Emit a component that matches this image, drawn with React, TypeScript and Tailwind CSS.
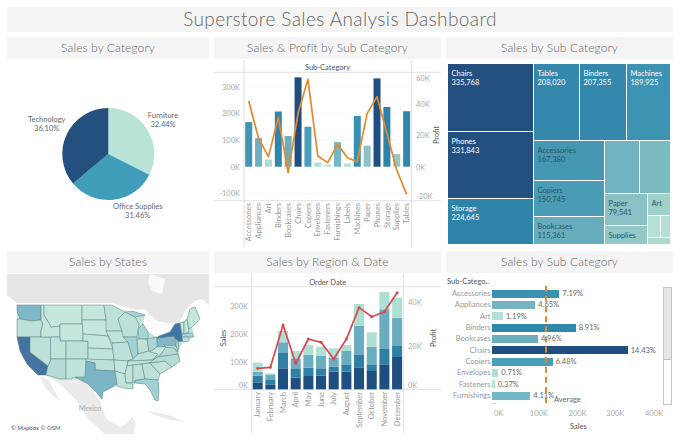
const font = { fontFamily: "Lato, 'Open Sans', sans-serif" }

function Header({ title }: { title: string }) {
  return (
    <div className="h-[22px] bg-[#f4f4f4] flex items-center justify-center text-[12px] font-light text-[#666] tracking-[0.1px]">
      {title}
    </div>
  )
}

function polar(cx: number, cy: number, r: number, pct: number) {
  const a = (pct / 100) * 2 * Math.PI
  return [cx + r * Math.sin(a), cy - r * Math.cos(a)]
}

function slice(from: number, to: number) {
  const [x1, y1] = polar(108.3, 154, 46, from)
  const [x2, y2] = polar(108.3, 154, 46, to)
  const large = to - from > 50 ? 1 : 0
  return `M108.3 154L${x1} ${y1}A46 46 0 ${large} 1 ${x2} ${y2}Z`
}

function PieChart() {
  return (
    <svg viewBox="7 60 202 190" className="w-[202px] h-[190px] block" fontSize="7.5" fill="#666" textAnchor="middle">
      <path d={slice(0, 32.44)} fill="#b9e3d7" />
      <path d={slice(32.44, 63.9)} fill="#419ebb" />
      <path d={slice(63.9, 100)} fill="#24507f" />
      <text x="163" y="118">Furniture</text>
      <text x="163" y="127">32.44%</text>
      <text x="46.7" y="122">Technology</text>
      <text x="46.7" y="131">36.10%</text>
      <text x="137.7" y="209">Office Supplies</text>
      <text x="137.7" y="218">31.46%</text>
    </svg>
  )
}

const subCats = [
  ["Accessories", 167, 213, "#3f95b3"],
  ["Appliances", 107, 325, "#6fb0bf"],
  ["Art", 27, 380, "#acdcd2"],
  ["Binders", 207, 262, "#2f88ac"],
  ["Bookcases", 115, 428, "#6bafbd"],
  ["Chairs", 335, 250, "#1f4e80"],
  ["Copiers", 150, 148, "#4a9fb8"],
  ["Envelopes", 16, 378, "#b2dfd3"],
  ["Fasteners", 8, 398, "#b9e3d8"],
  ["Furnishings", 92, 343, "#72b8c6"],
  ["Labels", 12, 383, "#b8e2d6"],
  ["Machines", 190, 395, "#3890b0"],
  ["Paper", 79, 250, "#8bc1c4"],
  ["Phones", 331, 200, "#1f4e80"],
  ["Storage", 224, 310, "#2f82a8"],
  ["Supplies", 47, 420, "#93c8c6"],
  ["Tables", 208, 493, "#2f88ac"],
] as const

function SubCategoryCombo() {
  const xAt = (i: number) => 248.7 + i * 9.87
  return (
    <svg viewBox="214 60 227 190" className="w-[227px] h-[190px] block" fontSize="7.5" fill="#aaa">
      <path d="M244 60V248M411.7 60V248M214 72.3H441M214 200.7H441" stroke="#d9d9d9" strokeWidth="0.8" fill="none" />
      <path d="M244 86.7H411.7M244 113.3H411.7M244 140H411.7M244 193.3H411.7" stroke="#f4f4f4" strokeWidth="0.8" fill="none" />
      {subCats.map(([name, val, , color], i) => (
        <rect key={name} x={xAt(i) - 3.5} y={166.7 - val * 0.2667} width="7" height={val * 0.2667} fill={color} />
      ))}
      <polyline
        points={subCats.map(([, , z], i) => `${xAt(i)},${30 + z / 3}`).join(" ")}
        fill="none"
        stroke="#e8872c"
        strokeWidth="1.7"
        strokeLinejoin="round"
      />
      <text x="327.5" y="70" textAnchor="middle" fill="#555">Sub-Category</text>
      {[["300K", 89.5], ["200K", 116], ["100K", 143], ["0K", 169.5], ["-100K", 196]].map(([t, y]) => (
        <text key={t} x="240" y={y} textAnchor="end">{t}</text>
      ))}
      {[["60K", 80.5], ["40K", 107], ["20K", 138], ["0K", 169.5], ["-20K", 198.5]].map(([t, y]) => (
        <text key={t} x="416" y={y}>{t}</text>
      ))}
      <text transform="translate(439 135) rotate(-90)" textAnchor="middle" fill="#555">Profit</text>
      {subCats.map(([name], i) => (
        <text key={name} transform={`translate(${xAt(i) + 2.7} 203) rotate(-90)`} textAnchor="end" fill="#999">{name}</text>
      ))}
    </svg>
  )
}

function Cell({ className, name, value, light }: { className: string; name?: string; value?: string; light?: boolean }) {
  return (
    <div className={`${className} pl-1 pt-[5px] text-[7.5px] leading-[9px] ${light ? "text-white" : "text-[#2f5566]"}`}>
      {name && <div>{name}</div>}
      {value && <div>{value}</div>}
    </div>
  )
}

function Treemap() {
  return (
    <div className="h-[190px] pt-[4px] pl-[1.5px] flex gap-[1px]">
      <div className="w-[85px] flex flex-col gap-[1px]">
        <Cell className="h-[67px] bg-[#24507f]" name="Chairs" value="335,768" light />
        <Cell className="h-[66px] bg-[#24507f]" name="Phones" value="331,843" light />
        <Cell className="h-[45px] bg-[#2f82a8]" name="Storage" value="224,645" light />
      </div>
      <div className="w-[136px] flex flex-col gap-[1px]">
        <div className="h-[76px] flex gap-[1px]">
          <Cell className="w-[45px] bg-[#3388ac]" name="Tables" value="208,020" light />
          <Cell className="w-[46px] bg-[#3388ac]" name="Binders" value="207,355" light />
          <Cell className="w-[43px] bg-[#3c93b2]" name="Machines" value="189,925" light />
        </div>
        <div className="h-[103px] flex gap-[1px]">
          <div className="w-[70px] flex flex-col gap-[1px]">
            <Cell className="h-[39px] bg-[#4597b2]" name="Accessories" value="167,380" />
            <Cell className="h-[35px] bg-[#4a9cb5]" name="Copiers" value="150,745" />
            <Cell className="h-[27px] bg-[#66aebd]" name="Bookcases" value="115,361" />
          </div>
          <div className="w-[65px] flex flex-col gap-[1px]">
            <div className="h-[52px] flex gap-[1px]">
              <div className="w-[34px] bg-[#71b3c2]" />
              <div className="w-[30px] bg-[#7dbbc3]" />
            </div>
            <div className="h-[50px] flex gap-[1px]">
              <div className="w-[42px] flex flex-col gap-[1px]">
                <Cell className="h-[31px] bg-[#8bc1c4]" name="Paper" value="79,541" />
                <Cell className="h-[18px] bg-[#93c8c6]" name="Supplies" />
              </div>
              <div className="w-[22px] flex flex-col gap-[1px]">
                <Cell className="h-[21px] bg-[#a0d0ca]" name="Art" />
                <div className="h-[21px] flex gap-[1px]">
                  <div className="w-[12px] bg-[#b7e0d4]" />
                  <div className="w-[9px] bg-[#b7e0d4]" />
                </div>
                <div className="h-[6px] bg-[#aed9cf]" />
              </div>
            </div>
          </div>
        </div>
      </div>
    </div>
  )
}

const usOutline =
  "M17 306H112L125 313 145 316 143 325 148 333 157 338 170 333 175 325 180 324 187 320 190 310 195 308 200 320 192 328 194 338 183 343 179 350 180 362 172 368 160 375 158 381 159 392 158 402 155 401 150 391 145 385 135 384 133 390 117 387 103 393 102 400 95 392 88 385 75 378 60 380 46 376 38 376 27 365 20 352 17 338Z"

const states: [string, string][] = [
  ["M17 306L41 306 41 321 32 322 20 320 17 312Z", "#7fb8c6"],
  ["M17 320L20 320 32 322 41 321 43 325 41 331 41 338 17 338Z", "#bde1d8"],
  ["M17 338L30 338 30 353 48 367 46 376 38 376 27 365 20 352Z", "#44739f"],
  ["M30 338L50.5 338 50.5 362 48 367 30 353Z", "#bde1d8"],
  ["M41 306L44 306 44 316 49 324 51 328 60 327 60 338 41 338 41 331 43 325 41 321Z", "#c4e6dc"],
  ["M44 306L82 306 82 325 60 325 60 327 51 328 49 324 44 316Z", "#c4e6dc"],
  ["M60 325L83 325 83 342 60 342Z", "#c4e6dc"],
  ["M50.5 338L60 338 60 342 66 342 66 360 50.5 360Z", "#c0e3da"],
  ["M66 342L88 342 88 360 66 360Z", "#bde1d8"],
  ["M50.5 360L66 360 66 380 60 380 46 376 48 367 50.5 362Z", "#b5dcd4"],
  ["M66 360L86 360 86 379 72 379 72 380 66 380Z", "#c0e3da"],
  ["M82 306L104 306 106 321 82 321Z", "#c4e6dc"],
  ["M82 321L106 321 108 337 83 335Z", "#c4e6dc"],
  ["M83 335L108 337 113 350 88 349 88 342 83 342Z", "#c4e6dc"],
  ["M88 349L113 350 114 361 88 361Z", "#c0e3da"],
  ["M86 360L114 361 115 372 95 371 95 364 86 362Z", "#bde1d8"],
  ["M86 362L95 364 95 371 115 372 117 385 103 393 102 400 95 392 88 385 82 382 75 378 85 378Z", "#7cb6c6"],
  ["M104 306L112 306 125 313 118 320 122 332 106 332 106 321Z", "#bde1d8"],
  ["M106 332L122 332 128 343 112 344Z", "#c0e3da"],
  ["M112 344L128 343 133 360 128 362 114 361Z", "#bde1d8"],
  ["M114 361L128 362 125 375 115 372Z", "#c4e6dc"],
  ["M115 372L125 375 126 384 132 384 133 390 124 389 117 387 117 385Z", "#c0e3da"],
  ["M118 320L125 313 135 318 139 325 137 338 123 338 122 332Z", "#bde1d8"],
  ["M123 338L137 338 138 355 133 360 128 343Z", "#a2d1d3"],
  ["M138 330L143 325 148 333 148 340 139 340Z", "#a8d5d3"],
  ["M125 313L132 312 145 316 135 318Z", "#a8d5d3"],
  ["M137 340L147 340 149 352 138 355Z", "#bde1d8"],
  ["M147 340L157 338 157 348 150 353 149 352Z", "#a8d5d3"],
  ["M128 362L133 360 138 355 149 352 158 355 153 361Z", "#bde1d8"],
  ["M127 367L128 362 153 361 163 358 156 363 133 366Z", "#bde1d8"],
  ["M127 367L133 366 133 383 126 384 125 375Z", "#c0e3da"],
  ["M133 366L142 365 145 380 135 381 135 384 133 383Z", "#bde1d8"],
  ["M142 365L150 364 160 375 158 381 145 380Z", "#bde1d8"],
  ["M135 382L145 380 158 381 159 392 158 402 155 401 150 391 145 385 135 384Z", "#a2d1d3"],
  ["M150 364L165 362 172 368 160 375Z", "#c0e3da"],
  ["M150 364L156 358 178 355 180 362 172 368 165 362Z", "#b5dcd4"],
  ["M153 361L160 356 166 348 174 349 178 355 156 358Z", "#b5dcd4"],
  ["M157 348L160 345 164 348 168 345 166 348 160 356 153 361 158 355 150 353Z", "#c8e8de"],
  ["M157 339L174 337 176 347 158 348Z", "#84b7c8"],
  ["M159 337L170 333 175 325 180 324 183 342 177 343 174 337 157 339Z", "#3f76a5"],
  ["M176 340L178 342 179 350 176 351Z", "#a8d5d3"],
  ["M164 346L176 347 178 353 174 349 166 348Z", "#c0e3da"],
  ["M180 324L184 323 184 335 182 335Z", "#c8e8de"],
  ["M184 323L187 320 189 333 184 335Z", "#c4e6dc"],
  ["M187 320L190 310 195 308 200 320 192 328 189 330Z", "#c4e6dc"],
  ["M182 335L192 334 194 338 182 338Z", "#a8d5d3"],
  ["M182 338L189 338 189 342 183 343Z", "#bde1d8"],
]

function UsMap() {
  return (
    <svg viewBox="7 275 202 160" className="w-[202px] h-[160px] block bg-white">
      <path d="M7 275H209V306L202 300 195 302 188 308 180 322 165 330 160 325 152 322 147 312 132 310 112 304 17 304 7 296Z" fill="#e6e6e6" />
      <path d="M150 275L165 280 162 295 152 292 148 283Z" fill="#fafafa" />
      <path d="M128 312L145 310 154 320 160 323 175 325 165 332 150 330 148 322 142 316Z" fill="#fafafa" />
      <path d="M46 376L75 379 88 386 100 402 106 420 120 428 128 424 132 422 135 435H105L88 420 75 400 60 385Z" fill="#ebebeb" />
      <path d="M40 378L48 380 60 402 54 398 45 388Z" fill="#ebebeb" />
      <path d="M147 412L168 416 186 423 170 421 155 416Z" fill="#ebebeb" />
      <path d="M120 432L132 418 136 424 132 435Z" fill="#ebebeb" />
      <path d={usOutline} fill="#c0e3da" />
      {states.map(([d, fill], i) => (
        <path key={i} d={d} fill={fill} stroke="#5c7f85" strokeWidth="0.5" strokeLinejoin="round" />
      ))}
      <text x="90" y="412" textAnchor="middle" fontSize="7" fill="#aaa">Mexico</text>
      <text x="11" y="431" fontSize="6" fill="#555">© Mapbox © OSM</text>
    </svg>
  )
}

const months = [
  ["January", 412, 392, 380, 353, 370],
  ["February", 418, 403, 390, 385, 367],
  ["March", 370, 322, 292, 258, 240],
  ["April", 398, 372, 340, 318, 355],
  ["May", 393, 368, 330, 300, 282],
  ["June", 392, 370, 332, 305, 292],
  ["July", 380, 365, 338, 310, 342],
  ["August", 380, 358, 318, 300, 282],
  ["September", 367, 330, 242, 177, 188],
  ["October", 378, 358, 305, 262, 215],
  ["November", 358, 310, 193, 141, 200],
  ["December", 336, 303, 218, 158, 143],
] as const

function RegionDate() {
  const xAt = (i: number) => 257.7 + i * 12.67
  const py = (z: number) => 245 + z / 3
  const shades = ["#1f4e80", "#2f7fa6", "#6aadc0", "#aedfd4"]
  return (
    <svg viewBox="214 274 227 161" className="w-[227px] h-[161px] block" fontSize="7.5" fill="#aaa">
      <path d="M251.7 274V433M403.3 274V433M214 286.7H441M214 389.3H441" stroke="#d9d9d9" strokeWidth="0.8" fill="none" />
      <path d="M251.7 306.3H403.3M251.7 334H403.3M251.7 361.7H403.3" stroke="#f4f4f4" strokeWidth="0.8" fill="none" />
      {months.map((m, i) => (
        <g key={m[0]}>
          {shades.map((c, s) => {
            const top = m[s + 1] as number
            const bottom = s === 0 ? 433 : (m[s] as number)
            return <rect key={c} x={xAt(i) - 5} y={py(top)} width="10" height={(bottom - top) / 3} fill={c} />
          })}
        </g>
      ))}
      <polyline
        points={months.map((m, i) => `${xAt(i)},${py(m[5])}`).join(" ")}
        fill="none"
        stroke="#d8484f"
        strokeWidth="1.7"
        strokeLinejoin="round"
      />
      {months.map((m, i) => (
        <circle key={m[0]} cx={xAt(i)} cy={py(m[5])} r="1.5" fill="#d8484f" />
      ))}
      <text x="327.7" y="284.5" textAnchor="middle" fill="#555">Order Date</text>
      {[["300K", 309], ["200K", 337], ["100K", 364.5], ["0K", 388]].map(([t, y]) => (
        <text key={t} x="248" y={y} textAnchor="end">{t}</text>
      ))}
      {[["40K", 304.5], ["20K", 349], ["0K", 388]].map(([t, y]) => (
        <text key={t} x="408" y={y}>{t}</text>
      ))}
      <text transform="translate(226 338) rotate(-90)" textAnchor="middle" fill="#555">Sales</text>
      <text transform="translate(435.5 338) rotate(-90)" textAnchor="middle" fill="#555">Profit</text>
      {months.map((m, i) => (
        <text key={m[0]} transform={`translate(${xAt(i) + 2.7} 392) rotate(-90)`} textAnchor="end" fill="#999">{m[0]}</text>
      ))}
    </svg>
  )
}

const rows = [
  ["Accessories", 67.3, "7.19%", "#3a91b0"],
  ["Appliances", 43.3, "4.65%", "#74b3c0"],
  ["Art", 11, "1.19%", "#b3e0d5"],
  ["Binders", 83.7, "8.91%", "#2f88ac"],
  ["Bookcases", 46, "4.96%", "#6bafbd"],
  ["Chairs", 135.7, "14.43%", "#1f4e80"],
  ["Copiers", 60.7, "6.48%", "#4a9fb8"],
  ["Envelopes", 6.3, "0.71%", "#b2dfd3"],
  ["Fasteners", 3, "0.37%", "#b9e3d8"],
  ["Furnishings", 38.3, "4.11%", "#72b8c6"],
] as const

function SubCategoryBars() {
  return (
    <div className="h-[161px] relative pl-[1px] text-[7.5px]">
      <div className="h-[13px] pt-[3px] leading-[9px] text-[#555] whitespace-nowrap">Sub-Catego..</div>
      <div className="flex">
        <div className="w-[216px] h-[117px] overflow-hidden pt-[1px]">
          {rows.map(([name, w, pct, color]) => (
            <div key={name} className="h-[11.33px] flex items-center">
              <div className="w-[43.5px] text-right text-[#999] mr-[1.5px] whitespace-nowrap">{name}</div>
              <div className="h-[8px]" style={{ width: w, backgroundColor: color }} />
              <div className="ml-[3px] text-[#666] whitespace-nowrap">{pct}</div>
            </div>
          ))}
          <div className="h-[11.33px] flex items-center">
            <div className="w-[43.5px] mr-[1.5px]" />
            <div className="h-[8px] w-[4px] bg-[#b8e2d6]" />
          </div>
        </div>
        <div className="w-[8.5px] h-[118px] border border-[#c4c4c4] bg-white">
          <div className="h-[72px] bg-[#e6e6e6] border-b border-[#c4c4c4]" />
        </div>
      </div>
      <div className="flex w-[216px] pl-[47px] mt-[3px] text-[#aaa]">
        <span className="w-[38px]">0K</span>
        <span className="w-[41px]">100K</span>
        <span className="w-[40px]">200K</span>
        <span className="w-[41px]">300K</span>
        <span>400K</span>
      </div>
      <div className="mt-[2px] w-[216px] pl-[123px] text-[#555]">Sales</div>
      <div className="absolute left-[99px] top-[12px] h-[117px] border-l-2 border-dashed border-[#e8872c]" />
      <div className="absolute left-[108px] top-[120px] text-[#666]">Average</div>
    </div>
  )
}

export default function App() {
  return (
    <div className="w-[680px] h-[442px] bg-white px-[7px] pt-[7px] overflow-hidden" style={font}>
      <div className="h-[25px] bg-[#f4f4f4] flex items-center justify-center text-[19px] font-light text-[#666] tracking-[0.4px]">
        Superstore Sales Analysis Dashboard
      </div>
      <div className="mt-[5px] grid grid-cols-[202px_227px_227px] gap-x-[5px]">
        <div>
          <Header title="Sales by Category" />
          <div className="mt-[1px]"><PieChart /></div>
        </div>
        <div>
          <Header title="Sales & Profit by Sub Category" />
          <div className="mt-[1px]"><SubCategoryCombo /></div>
        </div>
        <div>
          <Header title="Sales by Sub Category" />
          <div className="mt-[1px]"><Treemap /></div>
        </div>
      </div>
      <div className="mt-[1px] grid grid-cols-[202px_227px_227px] gap-x-[5px]">
        <div>
          <Header title="Sales by States" />
          <div className="mt-[1px]"><UsMap /></div>
        </div>
        <div>
          <Header title="Sales by Region & Date" />
          <div className="mt-[1px]"><RegionDate /></div>
        </div>
        <div>
          <Header title="Sales by Sub Category" />
          <div className="mt-[1px]"><SubCategoryBars /></div>
        </div>
      </div>
    </div>
  )
}
